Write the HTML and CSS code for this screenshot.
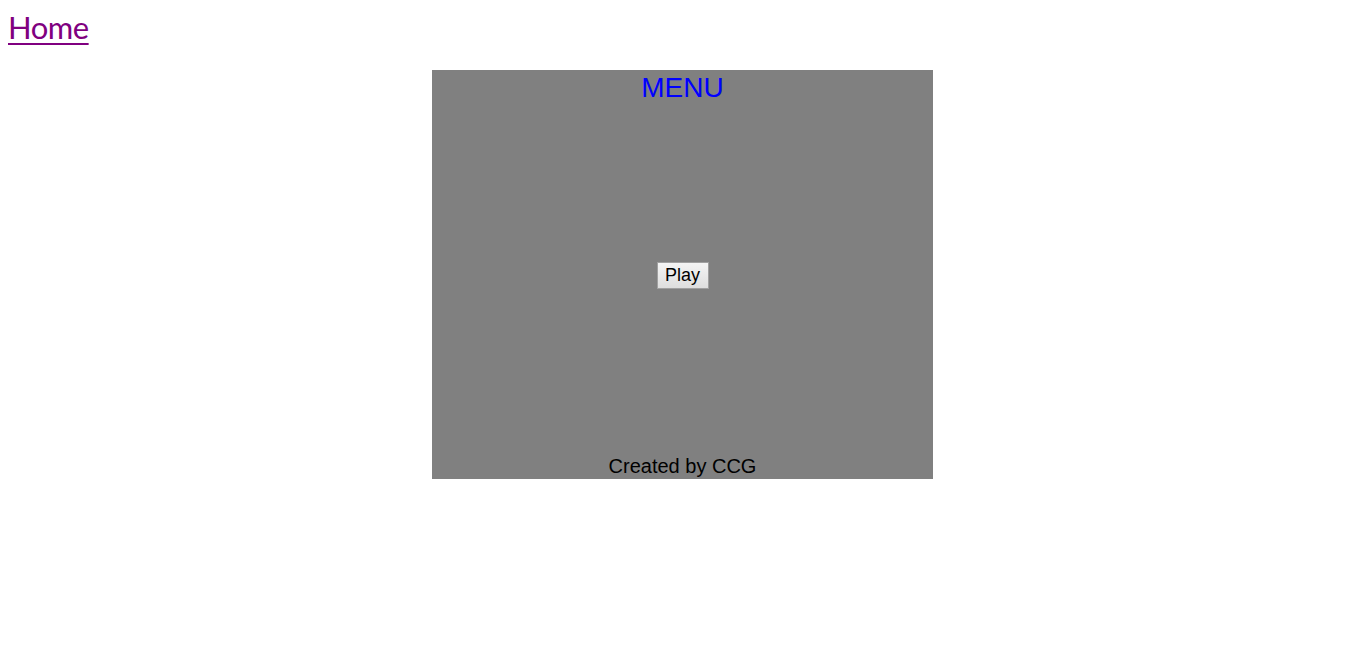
FILE: index.html
```html
<!DOCTYPE html>
<html>
<head>
<meta charset="utf-8">
<title>Menu</title>
<link rel="stylesheet" href="styles.css">
</head>
<body>
<div class="top">
  <a class="home" href="#">Home</a>
</div>
<div class="stage">
  <div class="menu">
    <div class="title">MENU</div>
    <div class="center">
      <button class="play" type="button">Play</button>
    </div>
    <div class="credit">Created by CCG</div>
  </div>
</div>
</body>
</html>
```

FILE: styles.css
```css
html, body {
  margin: 0;
  padding: 0;
  background: #ffffff;
}
body {
  padding: 8px;
}
.top {
  height: 62px;
  display: flex;
  align-items: flex-start;
}
.home {
  font-family: "Lato", "DejaVu Sans", sans-serif;
  font-weight: 400;
  font-size: 31px;
  line-height: 38px;
  letter-spacing: -0.5px;
  color: #800080;
  text-decoration: underline;
  text-decoration-thickness: 2px;
  text-underline-offset: 4px;
}
.stage {
  padding-left: 4px;
  display: flex;
  justify-content: center;
}
.menu {
  width: 501px;
  height: 409px;
  background: #808080;
  display: flex;
  flex-direction: column;
  font-family: "Liberation Sans", Arial, sans-serif;
  text-align: center;
}
.title {
  color: #0000ff;
  font-size: 28px;
  line-height: 32px;
  padding-top: 2px;
}
.center {
  flex: 1;
  display: flex;
  align-items: center;
  justify-content: center;
  padding-bottom: 8px;
}
.play {
  font-family: "Liberation Sans", Arial, sans-serif;
  font-size: 18px;
  line-height: 21px;
  padding: 1px 6px;
  margin: 0;
  color: #000;
  background: linear-gradient(#f4f4f4, #dedede);
  border: 1px solid #a0a0a0;
  border-radius: 0;
  height: 27px;
  width: 52px;
}
.credit {
  color: #000;
  font-size: 20px;
  line-height: 23px;
  padding-bottom: 1px;
}
```
